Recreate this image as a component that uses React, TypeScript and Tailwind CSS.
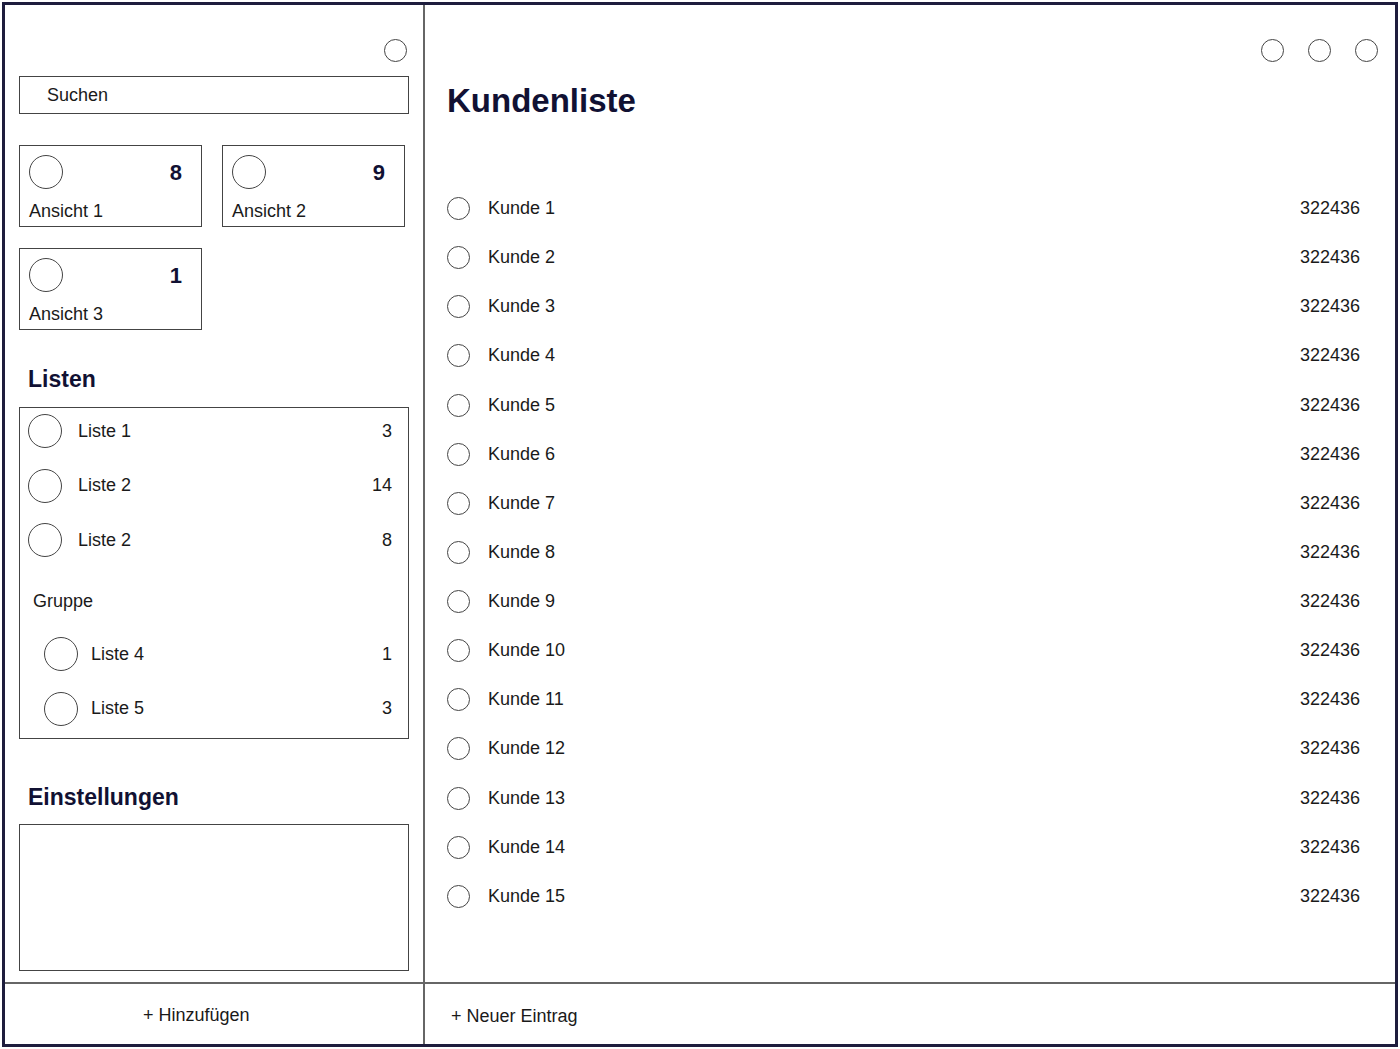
import React from 'react';

const views = [
  { name: 'Ansicht 1', count: 8 },
  { name: 'Ansicht 2', count: 9 },
  { name: 'Ansicht 3', count: 1 },
];

const lists = [
  { name: 'Liste 1', count: 3 },
  { name: 'Liste 2', count: 14 },
  { name: 'Liste 2', count: 8 },
];

const groupLists = [
  { name: 'Liste 4', count: 1 },
  { name: 'Liste 5', count: 3 },
];

const customers = Array.from({ length: 15 }, (_, i) => ({ name: `Kunde ${i + 1}`, number: '322436' }));

const Circle = ({ className }: { className: string }) => (
  <span className={`block shrink-0 rounded-full border border-[#444] ${className}`} />
);

const ListRow = ({ name, count, indent }: { name: string; count: number; indent?: boolean }) => (
  <div className={`flex h-[46px] items-center pr-[16px] ${indent ? 'pl-[24px]' : 'pl-[8px]'}`}>
    <Circle className="h-[34px] w-[34px]" />
    <span className={`${indent ? 'ml-[13px]' : 'ml-[16px]'} text-[18px] text-[#1a1a1a]`}>{name}</span>
    <span className="ml-auto text-[18px] text-[#1a1a1a]">{count}</span>
  </div>
);

const App = () => {
  return (
    <div className="h-[1049px] w-[1400px] bg-white p-[2px] font-['Liberation_Sans',Arial,sans-serif]">
      <div className="flex h-full w-[1396px] border-[3px] border-[#1e1d3d]">
        {/* left sidebar */}
        <div className="flex w-[420px] flex-col border-r-2 border-[#666]">
          <div className="flex-1 px-[14px]">
            <div className="flex justify-end pr-[2px] pt-[34px]">
              <Circle className="h-[23px] w-[23px]" />
            </div>
            <div className="mt-[14px] flex h-[38px] w-[390px] items-center border border-[#444] pl-[27px] text-[18px] text-[#1a1a1a]">
              Suchen
            </div>
            <div className="mt-[31px] grid w-[387px] grid-cols-[183px_183px] gap-x-[20px] gap-y-[21px]">
              {views.map((v) => (
                <div key={v.name} className="flex h-[82px] flex-col border border-[#444] px-[9px] pt-[9px]">
                  <div className="flex items-center justify-between pr-[10px]">
                    <Circle className="h-[34px] w-[34px]" />
                    <span className="text-[22px] font-bold text-[#111133]">{v.count}</span>
                  </div>
                  <span className="mt-[9px] text-[18px] text-[#1a1a1a]">{v.name}</span>
                </div>
              ))}
            </div>
            <h2 className="mt-[34px] pl-[9px] text-[23px] font-bold leading-[30px] text-[#111133]">Listen</h2>
            <div className="mt-[13px] flex h-[332px] w-[390px] flex-col border border-[#444]">
              {lists.map((l, i) => (
                <div key={i} className={i > 0 ? 'mt-[8.5px]' : ''}>
                  <ListRow name={l.name} count={l.count} />
                </div>
              ))}
              <div className="mt-[23px] flex h-[30px] items-center pl-[13px] text-[18px] text-[#1a1a1a]">Gruppe</div>
              {groupLists.map((l, i) => (
                <div key={i} className={i > 0 ? 'mt-[8.5px]' : 'mt-[15px]'}>
                  <ListRow name={l.name} count={l.count} indent />
                </div>
              ))}
            </div>
            <h2 className="mt-[43px] pl-[9px] text-[23px] font-bold leading-[30px] text-[#111133]">Einstellungen</h2>
            <div className="mt-[12px] h-[147px] w-[390px] border border-[#444]" />
          </div>
          <div className="flex h-[62px] items-center border-t-2 border-[#666] pb-[2px] pl-[138px] pt-[2px] text-[18px] text-[#1a1a1a]">
            <span className="mt-[2px]">+ Hinzufügen</span>
          </div>
        </div>

        {/* main */}
        <div className="flex flex-1 flex-col">
          <div className="flex-1 pl-[22px] pr-[35px]">
            <div className="-mr-[18px] flex justify-end gap-[24px] pt-[34px]">
              <Circle className="h-[23px] w-[23px]" />
              <Circle className="h-[23px] w-[23px]" />
              <Circle className="h-[23px] w-[23px]" />
            </div>
            <h1 className="mt-[19px] text-[33px] font-bold leading-[40px] text-[#111133]">Kundenliste</h1>
            <div className="mt-[63px]">
              {customers.map((c) => (
                <div key={c.name} className="flex h-[49.14px] items-center">
                  <Circle className="h-[23px] w-[23px]" />
                  <span className="ml-[18px] text-[18px] text-[#1a1a1a]">{c.name}</span>
                  <span className="ml-auto text-[18px] text-[#1a1a1a]">{c.number}</span>
                </div>
              ))}
            </div>
          </div>
          <div className="flex h-[62px] items-center border-t-2 border-[#666] pl-[26px] text-[18px] text-[#1a1a1a]">
            <span className="mt-[4px]">+ Neuer Eintrag</span>
          </div>
        </div>
      </div>
    </div>
  );
};

export default App;
